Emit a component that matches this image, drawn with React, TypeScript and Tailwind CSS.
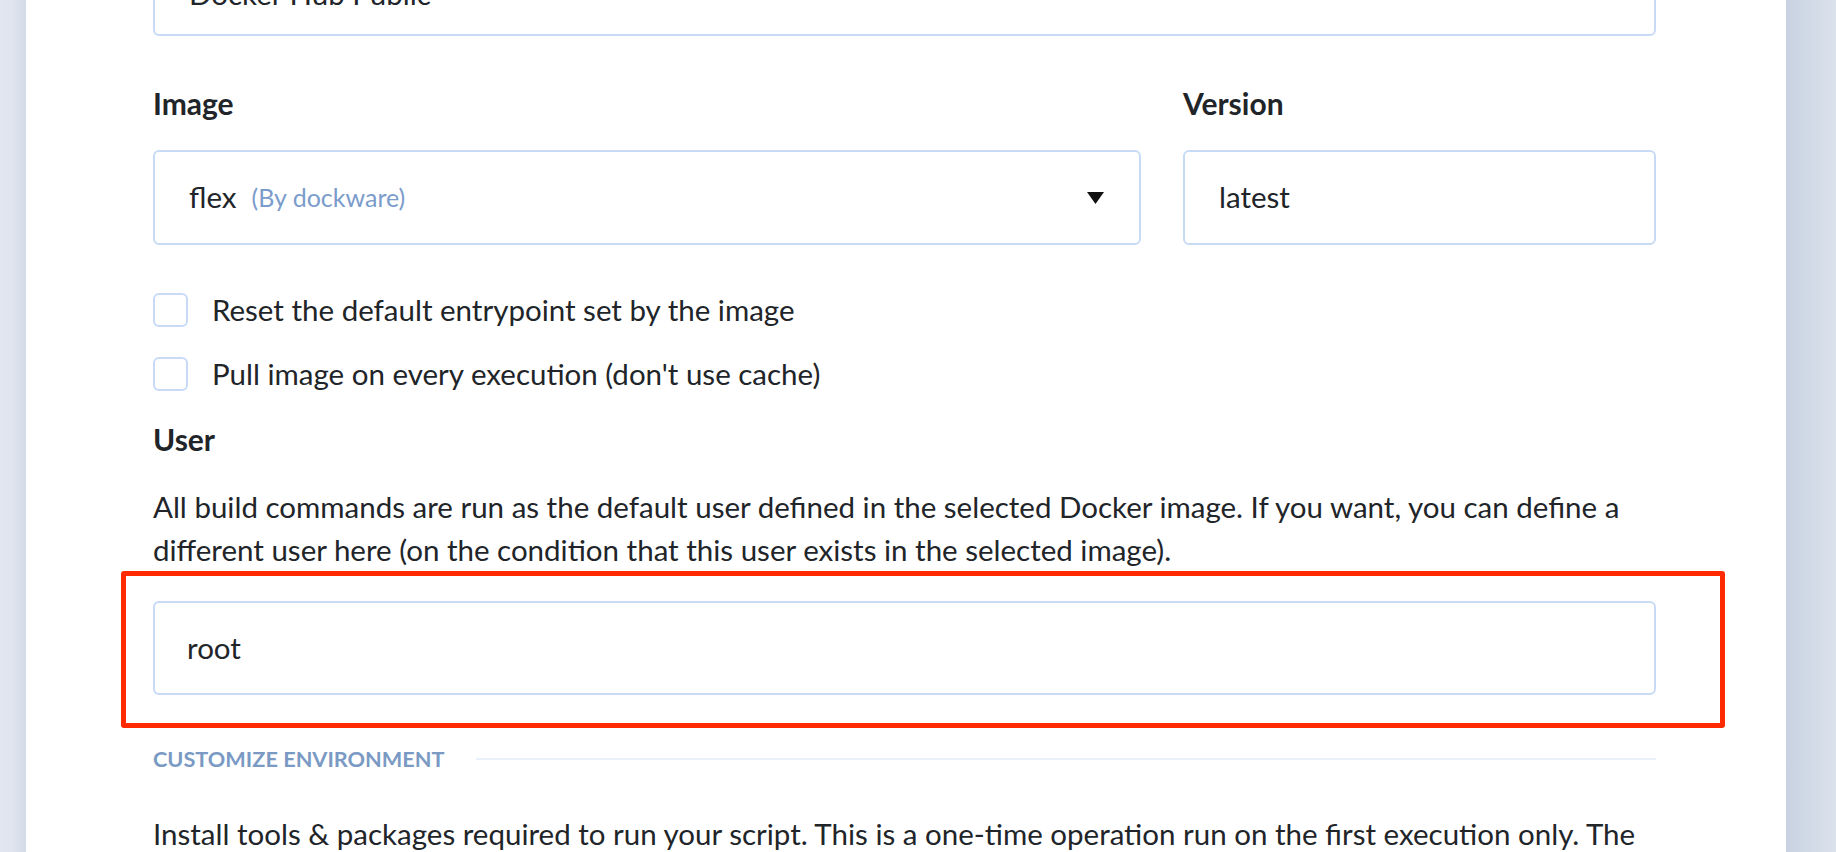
export default function App() {
  return (
    <div className="flex h-screen w-full overflow-hidden bg-[#dfe5ef] font-['Lato',sans-serif] text-[#212529]">
      <div className="w-[26px] shrink-0 bg-gradient-to-r from-[#e1e6f0] via-[#dfe5ef] to-[#d3dbe8]" />

      <main className="flex w-[1760px] shrink-0 flex-col overflow-hidden bg-white pl-[127px] pr-[130px]">
        {/* registry */}
        <div className="-mt-[58px] flex h-[94px] shrink-0 items-center rounded-md border-2 border-[#c8dbf6] px-[34px] pt-[10px] text-[29.5px]">
          Docker Hub Public
        </div>

        {/* image + version */}
        <div className="mt-[47px] grid shrink-0 grid-cols-[988px_1fr] gap-x-[42px]">
          <div className="flex flex-col">
            <label className="h-[40px] text-[30px] font-bold leading-[40px]">Image</label>
            <div className="mt-[27px] flex h-[95px] items-center rounded-md border-2 border-[#c8dbf6] pl-[34px] pr-[35px]">
              <span className="text-[29.5px]">flex</span>
              <span className="ml-[15px] text-[25px] text-[#7b9ccb]">(By dockware)</span>
              <svg className="ml-auto" width="17" height="12" viewBox="0 0 17 12">
                <path d="M0 0 H17 L8.5 12 Z" fill="#111" />
              </svg>
            </div>
          </div>
          <div className="flex flex-col">
            <label className="h-[40px] text-[30px] font-bold leading-[40px]">Version</label>
            <div className="mt-[27px] flex h-[95px] items-center rounded-md border-2 border-[#c8dbf6] px-[34px] text-[29.5px]">
              latest
            </div>
          </div>
        </div>

        {/* options */}
        <div className="mt-[48px] flex shrink-0 flex-col gap-[30px]">
          <label className="flex h-[34px] items-center">
            <span className="h-[34px] w-[35px] shrink-0 rounded-[6px] border-2 border-[#c8dbf6]" />
            <span className="ml-[24px] text-[29.5px]">Reset the default entrypoint set by the image</span>
          </label>
          <label className="flex h-[34px] items-center">
            <span className="h-[34px] w-[35px] shrink-0 rounded-[6px] border-2 border-[#c8dbf6]" />
            <span className="ml-[24px] text-[29.5px]">Pull image on every execution (don't use cache)</span>
          </label>
        </div>

        {/* user */}
        <label className="mt-[28px] h-[40px] shrink-0 text-[30px] font-bold leading-[40px]">User</label>
        <p className="mt-[26px] shrink-0 text-[29.5px] leading-[43px]">
          All build commands are run as the default user defined in the selected Docker image. If you want, you can define a
          different user here (on the condition that this user exists in the selected image).
        </p>

        <div className="-ml-[32px] -mr-[69px] shrink-0 rounded-[3px] border-[5px] border-[#ff2a00] pb-[28px] pl-[27px] pr-[64px] pt-[25px]">
          <div className="flex h-[94px] items-center rounded-md border-2 border-[#c8dbf6] px-[32px] text-[29.5px]">
            root
          </div>
        </div>

        {/* environment */}
        <div className="mt-[16px] flex h-[30px] shrink-0 items-center">
          <span className="text-[21.7px] font-bold uppercase text-[#7a9ac4]">Customize environment</span>
          <span className="ml-[32px] h-[2px] flex-1 bg-[#e9f0f9]" />
        </div>
        <p className="mt-[38px] shrink-0 text-[29.5px] leading-[43px]">
          Install tools &amp; packages required to run your script. This is a one-time operation run on the first execution only. The
          image will be rebuilt when you change the configuration.
        </p>
      </main>

      <div className="flex-1 bg-gradient-to-r from-[#c8d2e1] to-[#dbe2ec]" />
    </div>
  );
}
